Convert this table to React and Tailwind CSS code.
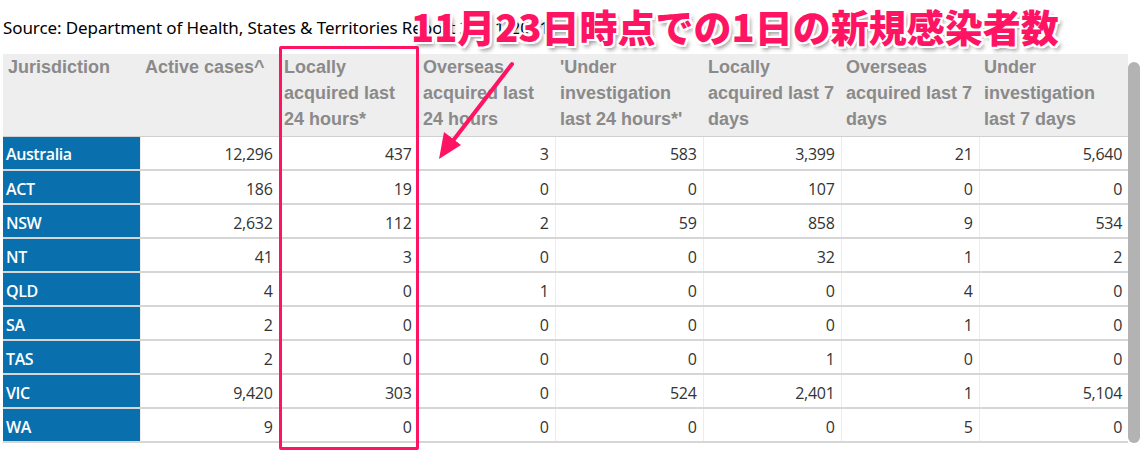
import React from 'react';

const headers = [
    'Jurisdiction',
    'Active cases^',
    'Locally acquired last 24 hours*',
    'Overseas acquired last 24 hours',
    "'Under investigation last 24 hours*'",
    'Locally acquired last 7 days',
    'Overseas acquired last 7 days',
    'Under investigation last 7 days',
];

const widths = ['w-[137px]', 'w-[139px]', 'w-[139px]', 'w-[137px]', 'w-[148px]', 'w-[138px]', 'w-[138px]', 'w-[149px]'];

const rows = [
    ['Australia', '12,296', '437', '3', '583', '3,399', '21', '5,640'],
    ['ACT', '186', '19', '0', '0', '107', '0', '0'],
    ['NSW', '2,632', '112', '2', '59', '858', '9', '534'],
    ['NT', '41', '3', '0', '0', '32', '1', '2'],
    ['QLD', '4', '0', '1', '0', '0', '4', '0'],
    ['SA', '2', '0', '0', '0', '0', '1', '0'],
    ['TAS', '2', '0', '0', '0', '1', '0', '0'],
    ['VIC', '9,420', '303', '0', '524', '2,401', '1', '5,104'],
    ['WA', '9', '0', '0', '0', '0', '5', '0'],
];

const App = () => {
    return (
        <div className="relative w-[1147px] h-[455px] bg-white overflow-hidden">
            <p className="pl-[3px] pt-[16px] h-[54px] text-[17px] leading-[24px] text-black font-['Noto_Sans',sans-serif] tracking-[-0.1px] whitespace-nowrap">
                Source: Department of Health, States &amp; Territories Report 23/11/2021
            </p>

            <table className="ml-[3px] border-collapse table-fixed w-[1125px]">
                <thead>
                    <tr className="bg-[#eeeeee]">
                        {headers.map((h, i) => (
                            <th
                                key={i}
                                className={`${widths[i]} h-[82px] align-top text-left font-bold text-[18px] leading-[26px] text-[#8a8a8a] pl-[5px] pr-[1px] pt-0 font-['Liberation_Sans',Arial,sans-serif] border-b border-[#d0d0d0]`}
                            >
                                {h}
                            </th>
                        ))}
                    </tr>
                </thead>
                <tbody>
                    {rows.map((row) => (
                        <tr key={row[0]} className="h-[34px] border-b-2 border-[#d6d6d6]">
                            {row.map((cell, i) =>
                                i === 0 ? (
                                    <td key={i} className="bg-[#0a6fad] text-white font-semibold text-[16px] px-[3px] pt-[3px] font-['Open_Sans',sans-serif] tracking-[-0.4px]">
                                        {cell}
                                    </td>
                                ) : (
                                    <td key={i} className="text-right text-[16px] text-[#333333] pr-[6px] pt-[3px] border-l border-[#ececec] font-['Open_Sans',sans-serif] tracking-[-0.3px]">
                                        {cell}
                                    </td>
                                )
                            )}
                        </tr>
                    ))}
                </tbody>
            </table>

            {/* scrollbar */}
            <div className="absolute left-[1128px] top-[62px] w-[12px] h-[381px] rounded-full bg-[#b3b3b3]" />

            {/* highlight box */}
            <div className="absolute left-[279px] top-[46px] w-[140px] h-[404px] border-[3px] border-[#ff1464] rounded-[2px]" />

            {/* annotation */}
            <div className="absolute left-[411px] top-[0px] text-[38px] leading-[52px] font-black text-[#ff1464] font-['Noto_Sans_CJK_JP',sans-serif] [text-shadow:2px_0_0_#fff,-2px_0_0_#fff,0_2px_0_#fff,0_-2px_0_#fff,2px_2px_0_#fff,-2px_-2px_0_#fff,2px_-2px_0_#fff,-2px_2px_0_#fff,3px_4px_4px_rgba(0,0,0,0.4)]">
                11月23日時点での1日の新規感染者数
            </div>

            <svg className="absolute left-0 top-0" width="1147" height="455" viewBox="0 0 1147 455">
                <path d="M512 64 L452 142" stroke="#ff1464" strokeWidth="4" strokeLinecap="round" />
                <path d="M439 159 L444 132 L461 145 Z" fill="#ff1464" />
            </svg>
        </div>
    );
};

export default App;
